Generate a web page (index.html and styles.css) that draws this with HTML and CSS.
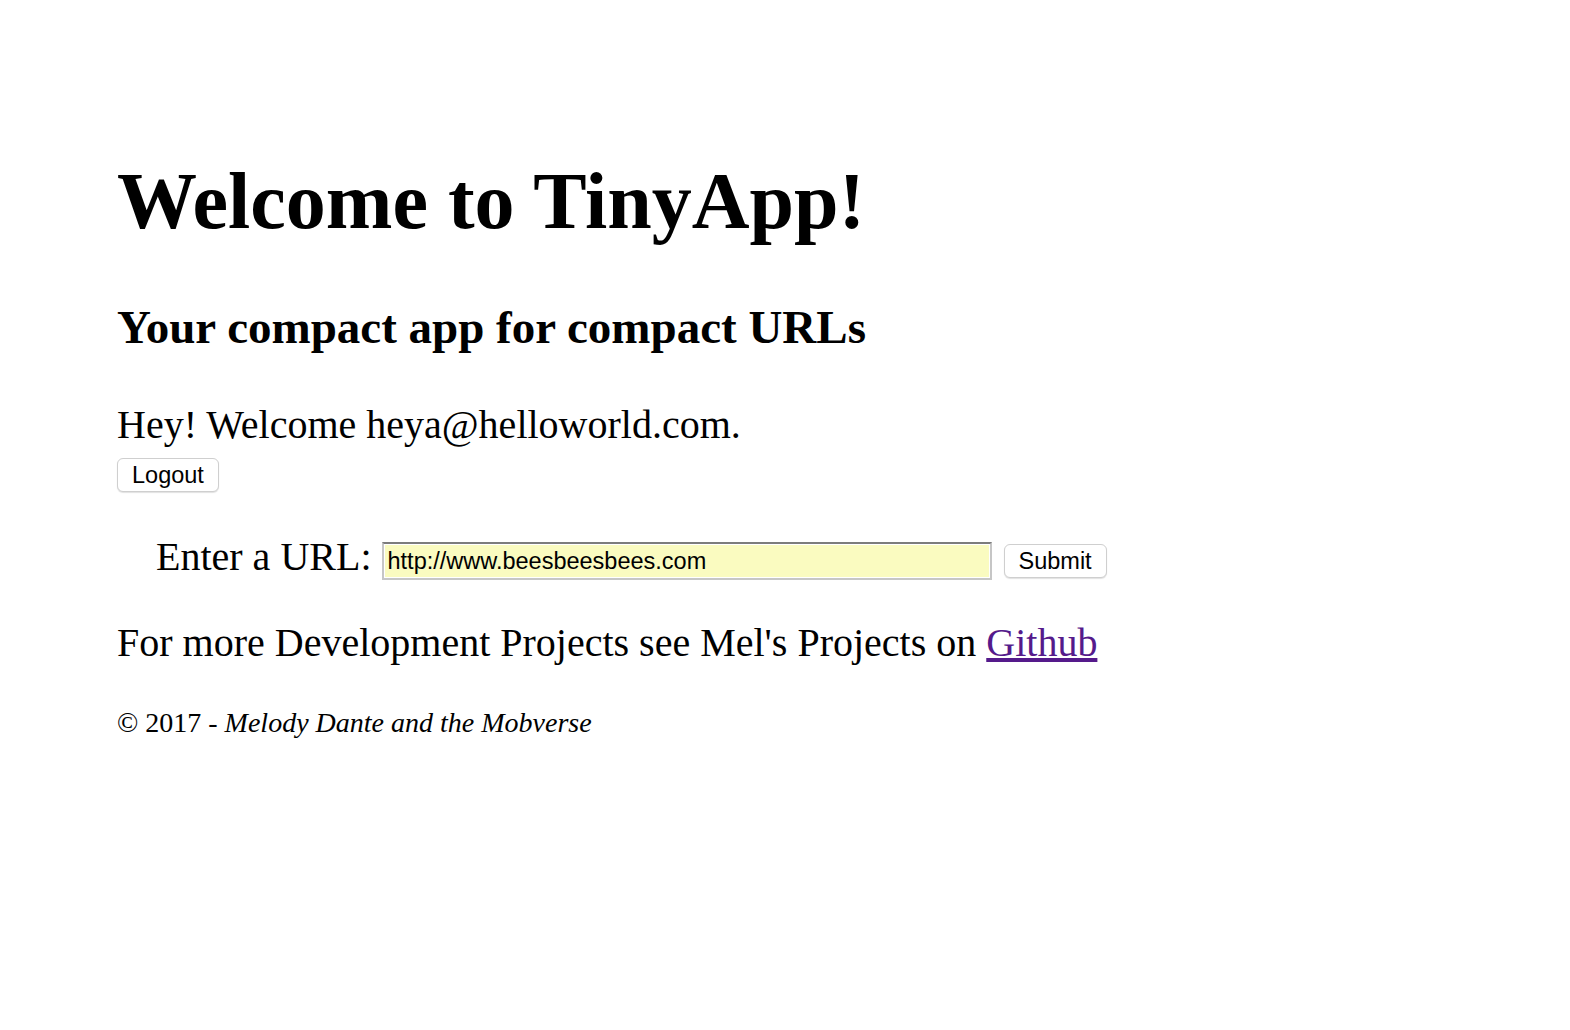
FILE: index.html
```html
<!DOCTYPE html>
<html>
<head>
<meta charset="utf-8">
<link rel="stylesheet" href="styles.css">
</head>
<body>
<main class="page">
  <h1 class="title">Welcome to TinyApp!</h1>
  <h2 class="subtitle">Your compact app for compact URLs</h2>
  <p class="greeting">Hey! Welcome heya@helloworld.com.</p>
  <form class="logout-form"><button type="button" class="btn">Logout</button></form>
  <form class="url-form">
    <label class="url-label">Enter a URL:</label>
    <input class="url-input" type="text" value="http://www.beesbeesbees.com">
    <button type="button" class="btn">Submit</button>
  </form>
  <p class="more">For more Development Projects see Mel's Projects on <a href="#" class="link">Github</a></p>
  <footer class="footer">© 2017 - <em>Melody Dante and the Mobverse</em></footer>
</main>
</body>
</html>
```

FILE: styles.css
```css
html, body { margin: 0; padding: 0; background: #fff; }
body { font-family: "Liberation Serif", "Times New Roman", serif; color: #000; }
.page { padding: 155px 0 0 117px; }
.title { font-size: 80px; font-weight: bold; margin: 0; line-height: 92px; }
.subtitle { font-size: 47px; font-weight: bold; margin: 54px 0 0 0; line-height: 52px; }
.greeting { font-size: 40px; margin: 49px 0 0 0; line-height: 46px; }
.logout-form { margin: 10px 0 0 0; display: flex; }
.btn { font-family: "Liberation Sans", Arial, sans-serif; font-size: 23.5px; background: #fff; border: 1px solid #cfcfcf; border-radius: 6px; padding: 0 14px; height: 34px; box-shadow: 0 1px 1px rgba(0,0,0,0.12); color: #000; line-height: 32px; }
.url-form { display: flex; align-items: center; margin: 42px 0 0 39px; height: 53px; }
.url-label { font-size: 40px; line-height: 46px; margin: 0 10px 7px 0; }
.url-input { width: 610px; height: 38px; box-sizing: border-box; background: #fafbc0; border: 2px solid #c6c6c6; border-top-color: #7c7c7c; box-shadow: inset 0 0 0 1px #fff; font-family: "Liberation Sans", Arial, sans-serif; font-size: 23.5px; padding: 2px 4px 0 4px; margin: 0 12px 0 0; color: #000; }
.more { font-size: 40px; margin: 33px 0 0 0; line-height: 46px; }
.link { color: #551a8b; }
.footer { font-size: 28px; line-height: 32px; margin-top: 41px; }
```
